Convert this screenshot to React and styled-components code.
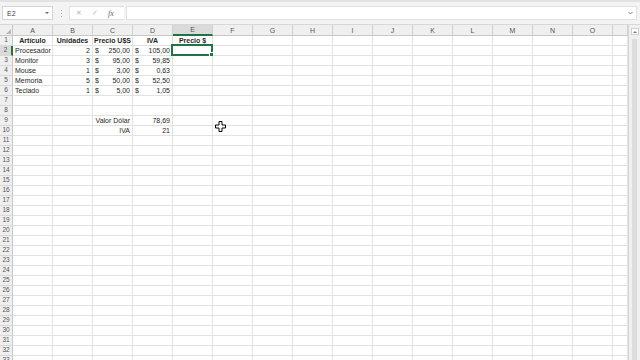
import React from "react";
import styled, { createGlobalStyle } from "styled-components";

const GlobalStyle = createGlobalStyle`
  html, body {
    margin: 0;
    padding: 0;
    background: #ffffff;
    overflow: hidden;
  }
  * {
    box-sizing: border-box;
  }
`;

const COLS = ["A", "B", "C", "D", "E", "F", "G", "H", "I", "J", "K", "L", "M", "N", "O"];
const ROW_COUNT = 33;

// cell content: [row][col] = { t, align, bold, cur }
const data = {
  1: {
    A: { t: "Artículo", align: "center", bold: true },
    B: { t: "Unidades", align: "center", bold: true },
    C: { t: "Precio U$S", align: "center", bold: true },
    D: { t: "IVA", align: "center", bold: true },
    E: { t: "Precio $", align: "center", bold: true },
  },
  2: { A: { t: "Procesador" }, B: { t: "2", align: "right" }, C: { t: "250,00", cur: true }, D: { t: "105,00", cur: true } },
  3: { A: { t: "Monitor" }, B: { t: "3", align: "right" }, C: { t: "95,00", cur: true }, D: { t: "59,85", cur: true } },
  4: { A: { t: "Mouse" }, B: { t: "1", align: "right" }, C: { t: "3,00", cur: true }, D: { t: "0,63", cur: true } },
  5: { A: { t: "Memoria" }, B: { t: "5", align: "right" }, C: { t: "50,00", cur: true }, D: { t: "52,50", cur: true } },
  6: { A: { t: "Teclado" }, B: { t: "1", align: "right" }, C: { t: "5,00", cur: true }, D: { t: "1,05", cur: true } },
  9: { C: { t: "Valor Dólar", align: "right" }, D: { t: "78,69", align: "right" } },
  10: { C: { t: "IVA", align: "right" }, D: { t: "21", align: "right" } },
};

const Window = styled.div`
  width: 640px;
  height: 360px;
  display: flex;
  flex-direction: column;
  background: #ffffff;
  font-family: "Liberation Sans", Arial, sans-serif;
  position: relative;
  overflow: hidden;
`;

const FormulaBar = styled.div`
  height: 25px;
  flex: none;
  display: flex;
  align-items: center;
  padding: 0 3px 0 2px;
  background: #f3f3f3;
  border-top: 2px solid #e2e2e2;
  border-bottom: 1px solid #d8d8d8;
`;

const NameBox = styled.div`
  width: 51px;
  height: 14px;
  background: #ffffff;
  border: 1px solid #d4d4d4;
  display: flex;
  align-items: center;
  justify-content: space-between;
  padding: 0 3px 0 4px;
  font-size: 7px;
  color: #444;
`;

const Caret = styled.span`
  width: 0;
  height: 0;
  border-left: 2px solid transparent;
  border-right: 2px solid transparent;
  border-top: 2px solid #666;
`;

const Dots = styled.div`
  width: 16px;
  display: flex;
  flex-direction: column;
  align-items: center;
  gap: 2px;
  span {
    width: 1px;
    height: 1px;
    background: #aaa;
  }
`;

const ActionBox = styled.div`
  width: 55px;
  height: 14px;
  background: #ffffff;
  border: 1px solid #e0e0e0;
  border-right: none;
  display: flex;
  align-items: center;
  padding-left: 6px;
  gap: 10px;
  color: #b8b8b8;
  font-size: 7px;
`;

const Fx = styled.span`
  font-family: "Liberation Serif", serif;
  font-style: italic;
  font-size: 8px;
  color: #666;
`;

const FormulaInput = styled.div`
  flex: 1;
  height: 14px;
  background: #ffffff;
  border: 1px solid #e0e0e0;
  margin-left: 2px;
  display: flex;
  align-items: center;
  justify-content: flex-end;
  padding-right: 3px;
`;

const Main = styled.div`
  flex: 1;
  display: flex;
  min-height: 0;
`;

const Sheet = styled.div`
  flex: 1;
  display: grid;
  grid-template-columns: 13px repeat(15, 40px) 1fr;
  grid-template-rows: 11px;
  grid-auto-rows: 10px;
  overflow: hidden;
  align-content: start;
`;

const Corner = styled.div`
  background: #efefef;
  border-right: 1px solid #c8c8c8;
  border-bottom: 1px solid #c8c8c8;
  position: relative;
  &::after {
    content: "";
    position: absolute;
    right: 1px;
    bottom: 1px;
    border-left: 5px solid transparent;
    border-bottom: 5px solid #b8b8b8;
  }
`;

const ColHead = styled.div`
  background: ${(p) => (p.$active ? "#dadada" : "#efefef")};
  border-right: 1px solid #d0d0d0;
  border-bottom: ${(p) => (p.$active ? "2px solid #217346" : "1px solid #c8c8c8")};
  font-size: 7px;
  color: #555;
  display: flex;
  align-items: center;
  justify-content: center;
  line-height: 1;
`;

const RowHead = styled.div`
  background: ${(p) => (p.$active ? "#dadada" : "#efefef")};
  border-right: ${(p) => (p.$active ? "2px solid #217346" : "1px solid #c8c8c8")};
  border-bottom: 1px solid #d8d8d8;
  font-size: 6.5px;
  color: #555;
  display: flex;
  align-items: center;
  justify-content: center;
  line-height: 1;
`;

const Cell = styled.div`
  position: relative;
  border-right: 1px solid #e2e2e2;
  border-bottom: 1px solid #e2e2e2;
  font-size: 7px;
  line-height: 1;
  color: #262626;
  font-weight: ${(p) => (p.$bold ? 700 : 400)};
  display: flex;
  align-items: center;
  justify-content: ${(p) =>
    p.$align === "right" ? "flex-end" : p.$align === "center" ? "center" : "space-between"};
  padding: 0 2px;
  white-space: nowrap;
`;

const Selection = styled.div`
  position: absolute;
  left: -2px;
  top: -2px;
  right: -1px;
  bottom: -1px;
  border: 2px solid #217346;
  pointer-events: none;
  &::after {
    content: "";
    position: absolute;
    right: -3px;
    bottom: -3px;
    width: 3px;
    height: 3px;
    background: #217346;
    border: 1px solid #fff;
  }
`;

const Scrollbar = styled.div`
  width: 12px;
  flex: none;
  background: #f0f0f0;
  border-left: 1px solid #d6d6d6;
  display: flex;
  flex-direction: column;
  align-items: center;
  padding-top: 3px;
  gap: 4px;
`;

const ScrollArrow = styled.div`
  width: 8px;
  height: 7px;
  background: #ffffff;
  border: 1px solid #d0d0d0;
  display: flex;
  align-items: center;
  justify-content: center;
  &::after {
    content: "";
    border-left: 2px solid transparent;
    border-right: 2px solid transparent;
    border-bottom: 2px solid #777;
  }
`;

const ScrollThumb = styled.div`
  flex: 1;
  width: 5px;
  background: #dcdcdc;
`;

const Pointer = styled.svg`
  position: absolute;
  left: 215px;
  top: 121px;
`;

function CellContent({ c }) {
  if (!c) return null;
  if (c.cur) {
    return (
      <>
        <span>$</span>
        <span>{c.t}</span>
      </>
    );
  }
  return <span>{c.t}</span>;
}

export default function App() {
  const rows = Array.from({ length: ROW_COUNT }, (_, i) => i + 1);
  return (
    <>
      <GlobalStyle />
      <Window>
        <FormulaBar>
          <NameBox>
            <span>E2</span>
            <Caret />
          </NameBox>
          <Dots>
            <span />
            <span />
            <span />
          </Dots>
          <ActionBox>
            <span>✕</span>
            <span>✓</span>
            <Fx>fx</Fx>
          </ActionBox>
          <FormulaInput>
            <svg width="5" height="4" viewBox="0 0 5 4">
              <path d="M0.5 1 L2.5 3 L4.5 1" fill="none" stroke="#777" strokeWidth="0.9" />
            </svg>
          </FormulaInput>
        </FormulaBar>
        <Main>
          <Sheet>
            <Corner />
            {COLS.map((col) => (
              <ColHead key={col} $active={col === "E"}>
                {col}
              </ColHead>
            ))}
            <ColHead />
            {rows.map((r) => (
              <React.Fragment key={r}>
                <RowHead $active={r === 2}>{r}</RowHead>
                {COLS.map((col) => {
                  const c = data[r] && data[r][col];
                  return (
                    <Cell key={col} $align={c && c.align} $bold={c && c.bold}>
                      <CellContent c={c} />
                      {r === 2 && col === "E" && <Selection />}
                    </Cell>
                  );
                })}
                <Cell />
              </React.Fragment>
            ))}
          </Sheet>
          <Scrollbar>
            <ScrollArrow />
            <ScrollThumb />
          </Scrollbar>
        </Main>
        <Pointer width="11" height="11" viewBox="0 0 11 11">
          <path
            d="M4 0.5 H7 V4 H10.5 V7 H7 V10.5 H4 V7 H0.5 V4 H4 Z"
            fill="#ffffff"
            stroke="#000"
            strokeWidth="1"
          />
        </Pointer>
      </Window>
    </>
  );
}
